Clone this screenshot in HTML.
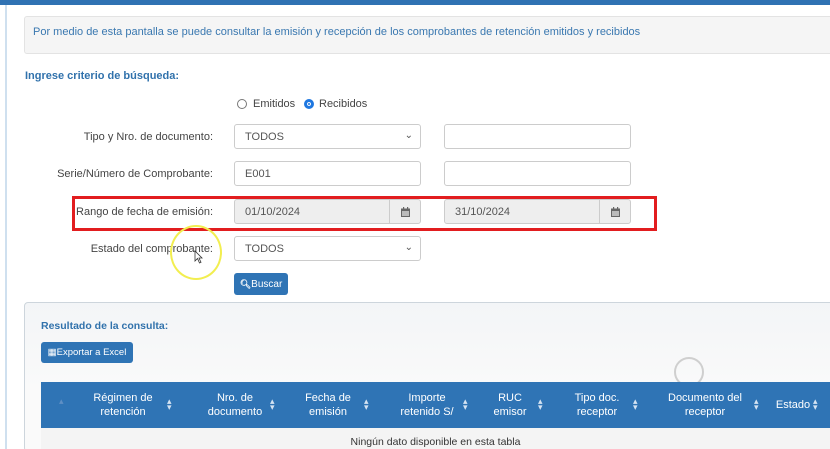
<!DOCTYPE html>
<html><head><meta charset="utf-8"><style>
*{box-sizing:border-box;margin:0;padding:0}
html,body{width:830px;height:449px;overflow:hidden}
body{background:#fff;font-family:"Liberation Sans",Arial,sans-serif;font-size:11px;color:#333;position:relative}
.a{position:absolute}
.lbl{position:absolute;text-align:right;width:200px;font-size:11px;color:#444}
.inp{position:absolute;width:187px;height:25px;border:1px solid #ccc;border-radius:3px;background:#fff;padding:6px 10px;font-size:11px;color:#555}
.dis{background:#eee}
.cal{position:absolute;right:0;top:0;width:31px;height:23px;border-left:1px solid #ccc;display:flex;align-items:center;justify-content:center}
.th{position:absolute;top:382px;height:46px;color:#fff;font-size:11px;text-align:center;line-height:14px;display:flex;align-items:center;justify-content:center}
.si{position:absolute;top:398px;color:#d5e3f2;font-size:9px;line-height:6px}
</style></head><body>
<div class="a" style="left:0;top:0;width:830px;height:5px;background:#2f72b3"></div>
<div class="a" style="left:5px;top:5px;width:2px;height:444px;background:#cfe0ef"></div>
<div class="a" style="left:24px;top:16px;width:810px;height:38px;background:#f5f5f5;border:1px solid #e3e3e3;border-radius:3px;padding:9px 8px;color:#3a78b0;font-size:11px">Por medio de esta pantalla se puede consultar la emisión y recepción de los comprobantes de retención emitidos y recibidos</div>
<div class="a" style="left:25px;top:70px;font-weight:bold;color:#3172ac;font-size:11px">Ingrese criterio de búsqueda:</div>
<div class="a" style="left:237px;top:99px;width:10px;height:10px;border:1px solid #777;border-radius:50%"></div>
<div class="a" style="left:253px;top:98px;color:#444">Emitidos</div>
<div class="a" style="left:304px;top:99px;width:10px;height:10px;border:3px solid #1e77e0;border-radius:50%;background:#1e77e0;box-shadow:inset 0 0 0 1px #fff"></div>
<div class="a" style="left:319px;top:98px;color:#444">Recibidos</div>

<div class="lbl" style="left:13px;top:131px">Tipo y Nro. de documento:</div>
<div class="inp" style="left:234px;top:124px">TODOS<span style="position:absolute;right:7px;top:5px;font-size:10px">&#8964;</span></div>
<div class="inp" style="left:444px;top:124px"></div>

<div class="lbl" style="left:13px;top:168px">Serie/Número de Comprobante:</div>
<div class="inp" style="left:234px;top:161px">E001</div>
<div class="inp" style="left:444px;top:161px"></div>

<div class="lbl" style="left:13px;top:206px">Rango de fecha de emisión:</div>
<div class="inp dis" style="left:234px;top:199px">01/10/2024<div class="cal"><svg width="9" height="10" viewBox="0 0 9 10"><rect x="0" y="1.5" width="9" height="8.5" fill="#666"/><rect x="1" y="4" width="7" height="5" fill="#bbb"/><rect x="2" y="0" width="1.2" height="3" fill="#666"/><rect x="6" y="0" width="1.2" height="3" fill="#666"/></svg></div></div>
<div class="inp dis" style="left:444px;top:199px">31/10/2024<div class="cal"><svg width="9" height="10" viewBox="0 0 9 10"><rect x="0" y="1.5" width="9" height="8.5" fill="#666"/><rect x="1" y="4" width="7" height="5" fill="#bbb"/><rect x="2" y="0" width="1.2" height="3" fill="#666"/><rect x="6" y="0" width="1.2" height="3" fill="#666"/></svg></div></div>
<div class="a" style="left:72px;top:196px;width:585px;height:35px;border:3px solid #e21d1f"></div>

<div class="lbl" style="left:13px;top:243px">Estado del comprobante:</div>
<div class="inp" style="left:234px;top:236px">TODOS<span style="position:absolute;right:7px;top:5px;font-size:10px">&#8964;</span></div>
<div class="a" style="left:170px;top:225px;width:52px;height:55px;border:2px solid #f2ee50;border-radius:50%"></div>
<svg class="a" style="left:194px;top:250px" width="9" height="14" viewBox="0 0 9 14"><path d="M1 1 L1 11 L3.5 8.5 L5.5 13 L7 12.3 L5 8 L8 8 Z" fill="#fff" stroke="#333" stroke-width="0.8"/></svg>
<div class="a" style="left:234px;top:273px;width:54px;height:22px;background:#2f74b5;border-radius:3px;color:#fff;font-size:10px;line-height:22px;text-align:center"><b style="font-size:9px">&#x1F50D;&#xFE0E;</b>Buscar</div>

<div class="a" style="left:24px;top:302px;width:810px;height:150px;border:1px solid #cdd5dc;border-radius:4px;background:linear-gradient(#f3f5f7,#fafafa 60%)"></div>
<div class="a" style="left:41px;top:320px;font-weight:bold;color:#3172ac;font-size:10.5px">Resultado de la consulta:</div>
<div class="a" style="left:41px;top:342px;width:92px;height:21px;background:#2f74b5;border-radius:3px;color:#fff;font-size:9.5px;line-height:21px;text-align:center">&#x25A6;Exportar a Excel</div>
<div class="a" style="left:674px;top:357px;width:30px;height:30px;border:2px solid #cfcfcf;border-radius:50%"></div>
<div class="a" style="left:41px;top:382px;width:789px;height:46px;background:#2f74b5"></div>
<div class="a" style="left:41px;top:428px;width:789px;height:21px;background:#f4f4f4"></div>
<div class="th" style="left:83px;width:80px">Régimen de<br>retención</div>
<div class="th" style="left:195px;width:80px">Nro. de<br>documento</div>
<div class="th" style="left:290px;width:76px">Fecha de<br>emisión</div>
<div class="th" style="left:387px;width:80px">Importe<br>retenido S/</div>
<div class="th" style="left:488px;width:44px">RUC<br>emisor</div>
<div class="th" style="left:561px;width:72px">Tipo doc.<br>receptor</div>
<div class="th" style="left:660px;width:90px">Documento del<br>receptor</div>
<div class="th" style="left:774px;width:38px">Estado</div>
<div class="si" style="left:59px;color:#5f8fc4">▴</div>
<div class="si" style="left:167px">▴<br>▾</div>
<div class="si" style="left:270px">▴<br>▾</div>
<div class="si" style="left:364px">▴<br>▾</div>
<div class="si" style="left:463px">▴<br>▾</div>
<div class="si" style="left:538px">▴<br>▾</div>
<div class="si" style="left:633px">▴<br>▾</div>
<div class="si" style="left:754px">▴<br>▾</div>
<div class="si" style="left:813px">▴<br>▾</div>
<div class="a" style="left:41px;top:436px;width:789px;text-align:center;font-size:10.5px;color:#333">Ningún dato disponible en esta tabla</div>
</body></html>
